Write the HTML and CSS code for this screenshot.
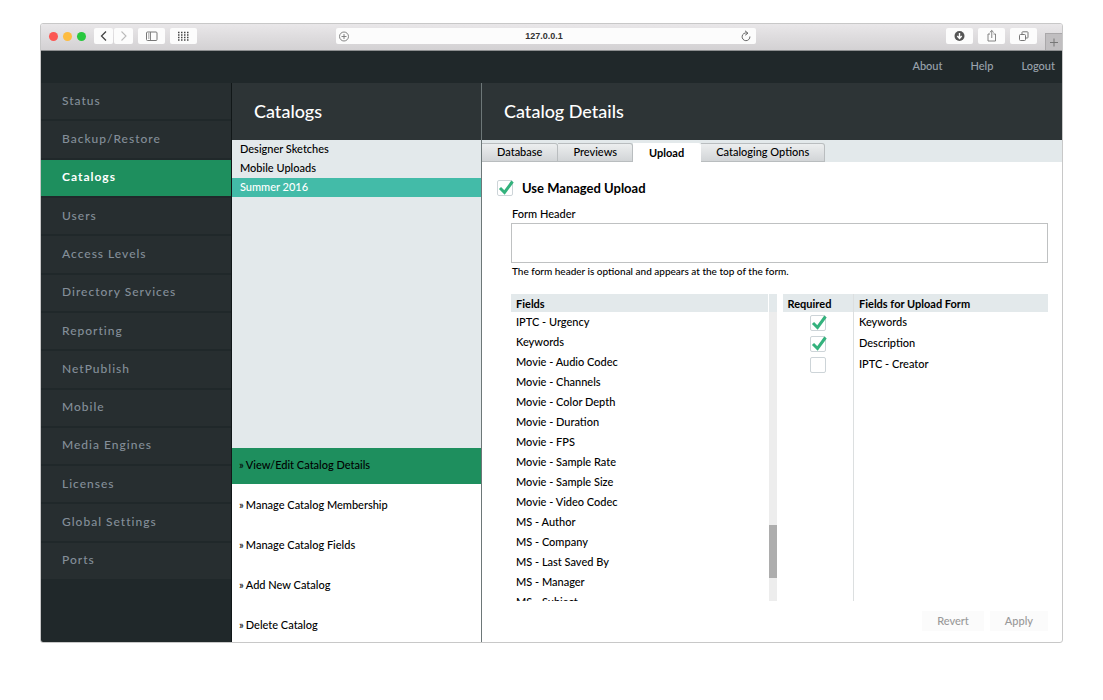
FILE: index.html
```html
<!DOCTYPE html>
<html lang="en">
<head>
    <meta charset="UTF-8">
    <meta name="viewport" content="width=device-width, initial-scale=1.0">
    <title>Catalog Details</title>
    <link rel="stylesheet" href="styles.css">
</head>
<body>
    <div class="window">
        <!-- Browser bar -->
        <div class="browser-bar">
            <div class="bar-left">
                <div class="lights">
                    <span class="light red"></span>
                    <span class="light yellow"></span>
                    <span class="light green"></span>
                </div>
                <div class="nav-buttons">
                    <button class="bar-button small" aria-label="Back">
                        <svg width="19" height="16" viewBox="0 0 19 16"><path d="M12 3.500 L7.500 8 L12 12.500" fill="none" stroke="#444" stroke-width="1.300"/></svg>
                    </button>
                    <button class="bar-button small" aria-label="Forward">
                        <svg width="19" height="16" viewBox="0 0 19 16"><path d="M7.500 3.500 L12 8 L7.500 12.500" fill="none" stroke="#bbb" stroke-width="1.100"/></svg>
                    </button>
                </div>
                <button class="bar-button" aria-label="Sidebar">
                    <svg width="27" height="16" viewBox="0 0 27 16"><rect x="8.500" y="4" width="10.500" height="8.500" rx="1" fill="none" stroke="#777"/><path d="M12.500 4 V12.500 M10 6 H11.500 M10 8 H11.500 M10 10 H11.500" stroke="#777" stroke-width="0.900"/></svg>
                </button>
                <button class="bar-button" aria-label="Top sites">
                    <svg width="27" height="16" viewBox="0 0 27 16"><path d="M8 4.500 H19 M8 7 H19 M8 9.500 H19 M8 12 H19" stroke="#444" stroke-width="1.300" stroke-dasharray="1.500 1.500"/></svg>
                </button>
            </div>
            <div class="address">
                <svg width="16" height="16" viewBox="0 0 16 16"><circle cx="8" cy="8.500" r="4.500" fill="none" stroke="#777" stroke-width="0.900"/><path d="M5.500 8.500 H10.500 M8 6 V11" stroke="#777" stroke-width="0.900"/></svg>
                <input class="address-input" type="text" aria-label="Address" value="127.0.0.1">
                <svg width="20" height="16" viewBox="0 0 20 16"><path d="M11 5 A3.900 3.900 0 1 0 13.900 8.500" fill="none" stroke="#666" stroke-width="1"/><path d="M9 2.800 L12 5.200 L9.200 7.200" fill="none" stroke="#666" stroke-width="1"/></svg>
            </div>
            <div class="bar-right">
                <button class="bar-button" aria-label="Downloads">
                    <svg width="27" height="16" viewBox="0 0 27 16"><circle cx="13.500" cy="8" r="5" fill="#555"/><path d="M13.500 5 V10 M11.300 8 L13.500 10.400 L15.700 8" fill="none" stroke="#fff" stroke-width="1.400"/></svg>
                </button>
                <button class="bar-button" aria-label="Share">
                    <svg width="27" height="16" viewBox="0 0 27 16"><path d="M12 6 H10 V13 H17.500 V6 H15.500 M13.750 10 V2.500 M11.800 4.400 L13.750 2.500 L15.700 4.400" fill="none" stroke="#777" stroke-width="0.900"/></svg>
                </button>
                <button class="bar-button" aria-label="Tabs">
                    <svg width="27" height="16" viewBox="0 0 27 16"><rect x="9.500" y="6.500" width="6" height="6" rx="1" fill="none" stroke="#777"/><path d="M12 6 V4.500 Q12 3.800 12.700 3.800 H17.300 Q18 3.800 18 4.500 V9.300 Q18 10 17.300 10 H16" fill="none" stroke="#777"/></svg>
                </button>
                <button class="new-tab" aria-label="New tab">
                    <svg width="16" height="16" viewBox="0 0 16 16"><path d="M4 8.500 H12 M8 4.500 V12.500" stroke="#777"/></svg>
                </button>
            </div>
        </div>

        <div class="topbar">
            <a href="#">About</a>
            <a href="#">Help</a>
            <a href="#">Logout</a>
        </div>

        <div class="main">
            <div class="sidebar">
                <nav class="menu">
                    <a href="#">Status</a>
                    <a href="#">Backup/Restore</a>
                    <a href="#" class="active">Catalogs</a>
                    <a href="#">Users</a>
                    <a href="#">Access Levels</a>
                    <a href="#">Directory Services</a>
                    <a href="#">Reporting</a>
                    <a href="#">NetPublish</a>
                    <a href="#">Mobile</a>
                    <a href="#">Media Engines</a>
                    <a href="#">Licenses</a>
                    <a href="#">Global Settings</a>
                    <a href="#">Ports</a>
                </nav>
            </div>

            <div class="catalogs">
                <h2 class="panel-title">Catalogs</h2>
                <ul class="catalog-list">
                    <li><a href="#">Designer Sketches</a></li>
                    <li><a href="#">Mobile Uploads</a></li>
                    <li class="selected"><a href="#">Summer 2016</a></li>
                </ul>
                <ul class="actions">
                    <li class="current"><a href="#">View/Edit Catalog Details</a></li>
                    <li><a href="#">Manage Catalog Membership</a></li>
                    <li><a href="#">Manage Catalog Fields</a></li>
                    <li><a href="#">Add New Catalog</a></li>
                    <li><a href="#">Delete Catalog</a></li>
                </ul>
            </div>

            <div class="details">
                <h2 class="panel-title">Catalog Details</h2>
                <div class="tabs">
                    <button class="tab">Database</button>
                    <button class="tab">Previews</button>
                    <button class="tab open">Upload</button>
                    <button class="tab">Cataloging Options</button>
                </div>

                <div class="upload">
                    <label class="managed">
                        <span class="check">
                            <input type="checkbox" checked>
                            <svg class="tick" width="18" height="16" viewBox="0 0 18 16"><path d="M3 8 L7.500 12.500 L15.500 1.500" fill="none" stroke="#34b27d" stroke-width="3"/></svg>
                        </span>
                        Use Managed Upload
                    </label>

                    <div class="form">
                        <label class="form-label" for="formHeader">Form Header</label>
                        <textarea id="formHeader" class="form-header"></textarea>
                        <p class="hint">The form header is optional and appears at the top of the form.</p>

                        <div class="tables">
                            <div class="fields">
                                <table class="field-table">
                                    <thead><tr><th>Fields</th></tr></thead>
                                    <tbody>
                                        <tr><td>IPTC - Urgency</td></tr>
                                        <tr><td>Keywords</td></tr>
                                        <tr><td>Movie - Audio Codec</td></tr>
                                        <tr><td>Movie - Channels</td></tr>
                                        <tr><td>Movie - Color Depth</td></tr>
                                        <tr><td>Movie - Duration</td></tr>
                                        <tr><td>Movie - FPS</td></tr>
                                        <tr><td>Movie - Sample Rate</td></tr>
                                        <tr><td>Movie - Sample Size</td></tr>
                                        <tr><td>Movie - Video Codec</td></tr>
                                        <tr><td>MS - Author</td></tr>
                                        <tr><td>MS - Company</td></tr>
                                        <tr><td>MS - Last Saved By</td></tr>
                                        <tr><td>MS - Manager</td></tr>
                                        <tr><td>MS - Subject</td></tr>
                                    </tbody>
                                </table>
                                <div class="scrollbar">
                                    <div class="thumb"></div>
                                </div>
                            </div>

                            <div class="chosen">
                                <table class="chosen-table">
                                    <thead><tr><th class="required">Required</th><th>Fields for Upload Form</th></tr></thead>
                                    <tbody>
                                        <tr>
                                            <td class="required"><span class="check"><input type="checkbox" id="reqKeywords" checked><svg class="tick" width="18" height="16" viewBox="0 0 18 16"><path d="M3 8 L7.500 12.500 L15.500 1.500" fill="none" stroke="#34b27d" stroke-width="3"/></svg></span></td>
                                            <td><label for="reqKeywords">Keywords</label></td>
                                        </tr>
                                        <tr>
                                            <td class="required"><span class="check"><input type="checkbox" id="reqDescription" checked><svg class="tick" width="18" height="16" viewBox="0 0 18 16"><path d="M3 8 L7.500 12.500 L15.500 1.500" fill="none" stroke="#34b27d" stroke-width="3"/></svg></span></td>
                                            <td><label for="reqDescription">Description</label></td>
                                        </tr>
                                        <tr>
                                            <td class="required"><span class="check"><input type="checkbox" id="reqCreator"><svg class="tick" width="18" height="16" viewBox="0 0 18 16"><path d="M3 8 L7.500 12.500 L15.500 1.500" fill="none" stroke="#34b27d" stroke-width="3"/></svg></span></td>
                                            <td><label for="reqCreator">IPTC - Creator</label></td>
                                        </tr>
                                        <tr class="filler"><td class="required"></td><td></td></tr>
                                    </tbody>
                                </table>
                            </div>
                        </div>

                        <div class="buttons">
                            <button class="button" disabled>Revert</button>
                            <button class="button" disabled>Apply</button>
                        </div>
                    </div>
                </div>
            </div>
        </div>
    </div>
</body>
</html>
```
FILE: styles.css
```css
* {
    box-sizing: border-box;
}
body {
    margin: 0;
    padding: 23px 40px;
    background-color: #fff;
    color: #000;
    font-family: "Trebuchet MS", Lato, sans-serif;
    font-size: 11px;
    font-weight: 500;
}
button, input, textarea {
    font: inherit;
    color: inherit;
}
a {
    color: inherit;
    text-decoration: none;
}
ul {
    list-style: none;
    margin: 0;
    padding: 0;
}
.window {
    border: 1px solid #c8c8c8;
    border-radius: 3px;
    overflow: hidden;
}

/* browser bar */
.browser-bar {
    display: grid;
    grid-template-columns: 295fr 420fr 306fr;
    height: 27px;
    padding-top: 4px;
    background: linear-gradient(#e9e7e9, #d3d1d3);
    border-bottom: 1px solid #8d8f90;
}
.bar-left, .bar-right {
    display: flex;
    align-items: flex-start;
    gap: 5px;
}
.bar-left {
    padding-left: 8px;
}
.bar-right {
    justify-content: flex-end;
}
.lights {
    display: flex;
    gap: 5px;
    padding: 4px 3px 0 0;
}
.light {
    width: 9px;
    height: 9px;
    border-radius: 50%;
}
.red {
    background-color: #fc5753;
}
.yellow {
    background-color: #fdbc40;
}
.green {
    background-color: #28c83f;
}
.nav-buttons {
    display: flex;
    gap: 1px;
}
.bar-button {
    width: 27px;
    height: 16px;
    padding: 0;
    border: none;
    border-radius: 2px;
    background-color: #fcfcfc;
}
.bar-button.small {
    width: 19px;
}
.bar-button svg, .new-tab svg {
    display: block;
}
.address {
    display: flex;
    height: 16px;
    border-radius: 2px;
    background-color: #fcfcfc;
}
.address-input {
    flex: 1;
    min-width: 0;
    padding: 0;
    border: none;
    background: none;
    text-align: center;
    font: bold 9px/16px "Liberation Sans", Arial, sans-serif;
    color: #333;
}
.new-tab {
    align-self: flex-end;
    width: 17px;
    height: 17px;
    margin-left: 3px;
    padding: 0;
    border: 1px solid #aaa8aa;
    border-width: 1px 0 0 1px;
    background-color: #c0bec0;
}

/* application */
.topbar {
    display: flex;
    justify-content: flex-end;
    gap: 28px;
    padding: 0 7px 2px 0;
    line-height: 30px;
    background-color: #20282a;
    color: #9aa3ad;
}
.main {
    display: grid;
    grid-template-columns: 191px 250px 1fr;
    min-height: 559px;
}
.sidebar {
    background-color: #20282a;
    border-right: 1px solid #111718;
}
.menu {
    display: flex;
    flex-direction: column;
    min-height: 498px;
}
.menu a {
    flex: 1;
    display: flex;
    align-items: center;
    padding: 0 0 2px 21px;
    background-color: #272e30;
    border-bottom: 2px solid #20282a;
    color: #848e99;
    font-size: 12px;
    letter-spacing: 1px;
}
.menu a.active {
    background-color: #1e8f5e;
    color: #fff;
    font-weight: bold;
}
.panel-title {
    margin: 0;
    padding-left: 22px;
    font-size: 18px;
    font-weight: 500;
    line-height: 57px;
    background-color: #2d3436;
    color: #fff;
}
.catalogs {
    display: flex;
    flex-direction: column;
    border-right: 1px solid #6d7778;
}
.catalog-list {
    flex: 1;
    background-color: #e3e9eb;
    line-height: 17px;
}
.catalog-list li {
    padding: 0 8px 2px;
}
.catalog-list .selected {
    background-color: #43bba8;
    color: #fff;
}
.actions {
    display: flex;
    flex-direction: column;
    gap: 6px;
    line-height: 34px;
}
.actions li {
    height: 34px;
    padding-left: 7px;
}
.actions li::before {
    content: "\00bb";
    margin-right: 2px;
}
.actions .current {
    background-color: #1e8f5e;
    box-shadow: 0 2px #1e8f5e;
}
.tabs {
    display: flex;
    height: 22px;
    padding-top: 3px;
    background-color: #e3e9eb;
}
.tab {
    padding: 0 15px 2px;
    border: 1px solid #b9bdbf;
    border-left-width: 0;
    border-top-right-radius: 3px;
    background: linear-gradient(#eceeef, #d2d5d7);
    line-height: 15px;
}
.tab.open {
    padding: 0 16px;
    border-color: #fff;
    background: #fff;
    font-weight: bold;
}

/* upload form */
.upload {
    padding: 17px 14px 11px 15px;
}
.check {
    position: relative;
    display: block;
    width: 16px;
    height: 16px;
}
.check input {
    appearance: none;
    display: block;
    width: 16px;
    height: 16px;
    margin: 0;
    border: 1px solid #cdd4d8;
    border-radius: 2px;
    background-color: #fff;
}
.tick {
    position: absolute;
    top: 0;
    left: 0;
    display: none;
    pointer-events: none;
}
.check input:checked + .tick {
    display: block;
}
.managed {
    display: flex;
    align-items: center;
    gap: 9px;
    font-size: 13px;
    font-weight: bold;
    line-height: 18px;
}
.form {
    padding-left: 14px;
}
.form-label {
    display: block;
    margin-top: 8px;
    padding-left: 1px;
    line-height: 18px;
}
.form-header {
    display: block;
    width: 100%;
    height: 40px;
    border: 1px solid #bfc1c2;
    resize: none;
}
.hint {
    margin: 0 0 15px;
    padding-left: 1px;
    font-size: 10px;
    line-height: 16px;
}
.tables {
    display: flex;
    gap: 6px;
    height: 307px;
}
.fields {
    flex: 1;
    display: flex;
    gap: 1px;
    overflow: hidden;
}
table {
    border-collapse: collapse;
}
th {
    height: 18px;
    padding: 0 5px;
    background-color: #e3e9eb;
    text-align: left;
    font-weight: bold;
}
td {
    padding: 0 5px 2px;
}
.field-table {
    flex: 1;
    align-self: flex-start;
}
.field-table td {
    height: 20px;
}
.scrollbar {
    width: 8px;
    padding-top: 213px;
    border-top: 18px solid #e3e9eb;
    background-color: #ededed;
}
.thumb {
    height: 53px;
    background-color: #adadad;
}
.chosen {
    flex: 1;
}
.chosen-table {
    width: 100%;
    height: 100%;
}
.chosen-table td {
    height: 21px;
}
.chosen-table .required {
    width: 71px;
    border-right: 1px solid #dcdfe0;
}
.chosen-table .check {
    margin: 3px auto 0;
}
.chosen-table .filler td {
    height: auto;
}
.buttons {
    display: flex;
    justify-content: flex-end;
    gap: 6px;
    margin-top: 10px;
}
.button {
    padding: 0 15px;
    border: none;
    background-color: #fbfbfb;
    color: #999;
    line-height: 20px;
}
```
